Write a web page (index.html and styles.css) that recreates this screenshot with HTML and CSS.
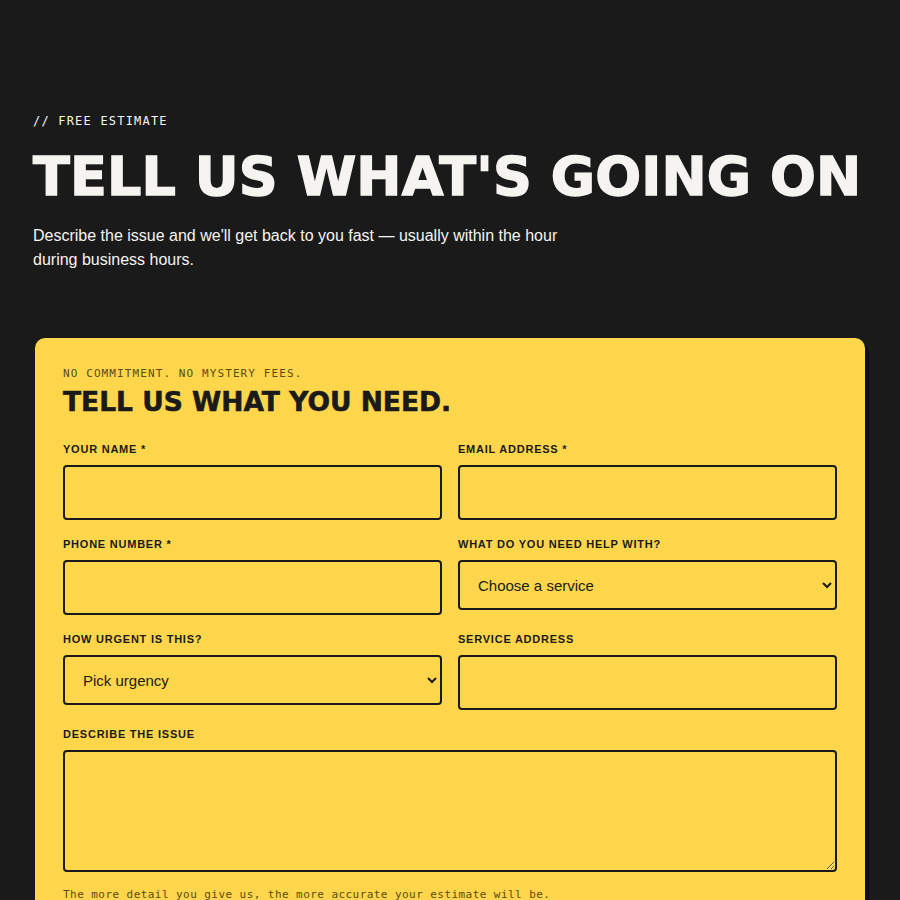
FILE: index.html
```html
<!DOCTYPE html>
<html lang="en">
<head>
<meta charset="utf-8">
<title>Free Estimate</title>
<link rel="stylesheet" href="styles.css">
</head>
<body>
<main class="page">
  <header class="intro">
    <p class="eyebrow">// FREE ESTIMATE</p>
    <h1 class="title">TELL US WHAT'S GOING ON</h1>
    <p class="lede">Describe the issue and we'll get back to you fast — usually within the hour during business hours.</p>
  </header>
  <section class="card">
    <p class="card-eyebrow">NO COMMITMENT. NO MYSTERY FEES.</p>
    <h2 class="card-title">TELL US WHAT YOU NEED.</h2>
    <form class="form">
      <div class="field">
        <label class="label" for="name">YOUR NAME *</label>
        <input class="input" id="name" type="text">
      </div>
      <div class="field">
        <label class="label" for="email">EMAIL ADDRESS *</label>
        <input class="input" id="email" type="email">
      </div>
      <div class="field">
        <label class="label" for="phone">PHONE NUMBER *</label>
        <input class="input" id="phone" type="tel">
      </div>
      <div class="field">
        <label class="label" for="service">WHAT DO YOU NEED HELP WITH?</label>
        <select class="select" id="service"><option>Choose a service</option></select>
      </div>
      <div class="field">
        <label class="label" for="urgency">HOW URGENT IS THIS?</label>
        <select class="select" id="urgency"><option>Pick urgency</option></select>
      </div>
      <div class="field">
        <label class="label" for="address">SERVICE ADDRESS</label>
        <input class="input" id="address" type="text">
      </div>
      <div class="field field-wide">
        <label class="label" for="issue">DESCRIBE THE ISSUE</label>
        <textarea class="textarea" id="issue"></textarea>
        <p class="hint">The more detail you give us, the more accurate your estimate will be.</p>
      </div>
    </form>
  </section>
</main>
</body>
</html>
```
FILE: styles.css
```css
* { box-sizing: border-box; }
html, body { margin: 0; padding: 0; }
body {
  background: #1b1a1a;
  color: #f5f4f0;
  font-family: "Liberation Sans", Arial, sans-serif;
}
.page {
  padding: 113px 35px 60px 33px;
}
.intro { margin-bottom: 66px; }
.eyebrow {
  margin: 0;
  font-family: "DejaVu Sans Mono", "Liberation Mono", monospace;
  font-size: 12px;
  letter-spacing: 0.1em;
  line-height: 16px;
  color: #f5f4f0;
}
.title {
  margin: 18px 0 17px;
  font-family: "DejaVu Sans", sans-serif;
  font-weight: 700;
  font-size: 54px;
  line-height: 60px;
  letter-spacing: 0.1px;
  -webkit-text-stroke: 1.4px #f5f4f0;
  color: #f5f4f0;
  white-space: nowrap;
}
.lede {
  margin: 0;
  max-width: 560px;
  font-size: 16px;
  line-height: 24px;
  color: #f5f4f0;
}
.card {
  margin-left: 2px;
  background: #fed64b;
  border-radius: 10px;
  box-shadow: 4px 4px 0 #0f0e0e;
  padding: 28px 28px 40px;
  color: #1b1a1a;
}
.card-eyebrow {
  margin: 0;
  font-family: "DejaVu Sans Mono", "Liberation Mono", monospace;
  font-size: 11px;
  letter-spacing: 0.1em;
  line-height: 16px;
  color: #5b4c12;
}
.card-title {
  margin: 4px 0 24px;
  font-family: "DejaVu Sans", sans-serif;
  font-weight: 700;
  font-size: 26.5px;
  line-height: 32px;
  -webkit-text-stroke: 0.6px #1b1a1a;
}
.form {
  display: grid;
  grid-template-columns: 1fr 1fr;
  column-gap: 16px;
  row-gap: 17px;
}
.field { display: flex; flex-direction: column; }
.field-wide { grid-column: 1 / -1; }
.label {
  font-size: 11px;
  font-weight: 700;
  letter-spacing: 0.07em;
  line-height: 14px;
  margin-bottom: 9px;
  color: #1b1a1a;
}
.input, .select, .textarea {
  width: 100%;
  background: #fed64b;
  border: 2px solid #1b1a1a;
  border-radius: 4px;
  font-family: "Liberation Sans", Arial, sans-serif;
  font-size: 15px;
  color: #1b1a1a;
}
.input { height: 55px; padding: 0 18px; }
.select { height: 50px; padding: 0 14px; }
.textarea { height: 122px; padding: 14px 18px; resize: vertical; display: block; }
.hint {
  margin: 16px 0 0;
  font-family: "DejaVu Sans Mono", "Liberation Mono", monospace;
  font-size: 11px;
  letter-spacing: 0.04em;
  line-height: 14px;
  color: #5b4c12;
}
```
